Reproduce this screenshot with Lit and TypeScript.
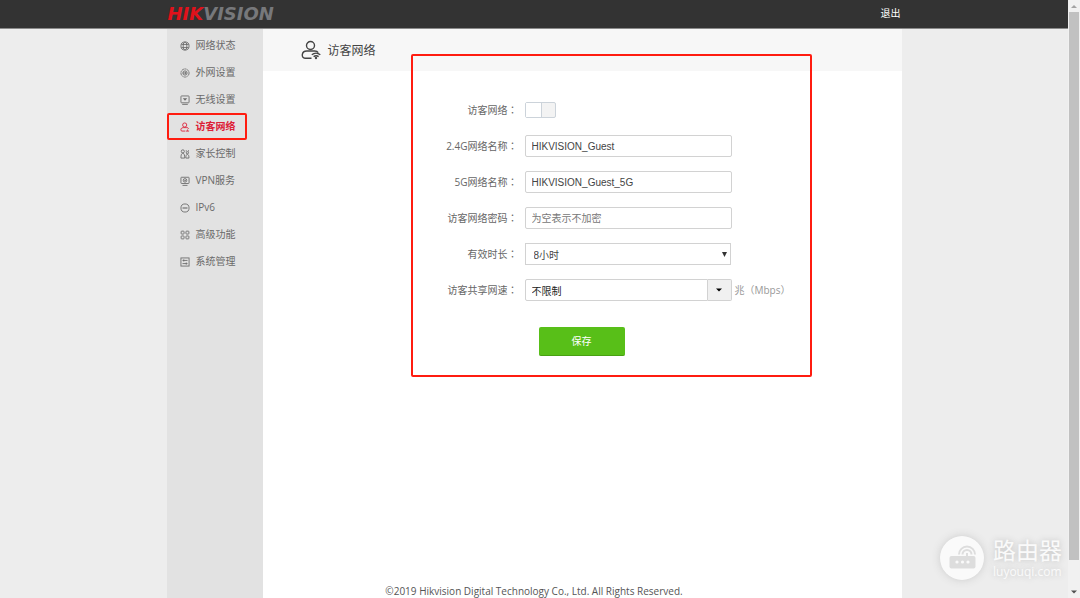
import { LitElement, html, css, svg } from "lit";
import { customElement, state } from "lit/decorators.js";

const icons: Record<string, unknown> = {
  globe: svg`<circle cx="8" cy="8" r="6.5"/><ellipse cx="8" cy="8" rx="3" ry="6.5"/><path d="M2.200 5.500h11.600M2.200 10.500h11.600"/>`,
  wan: svg`<circle cx="8" cy="8" r="6.5" stroke-dasharray="3.4 0.7"/><circle cx="8" cy="8" r="3.400"/><path d="M4.500 8h5M8 6.200l2 1.800-2 1.800"/>`,
  wifi: svg`<rect x="1.5" y="1.5" width="13" height="11" rx="1"/><path d="M4.500 5h7L8 9z" fill="currentColor" stroke="none"/><path d="M3.500 15h9"/>`,
  guest: svg`<circle cx="7.5" cy="4.8" r="3.3"/><path d="M8.5 14.5H3.2c-3 0-2.400-5.500 1.800-5.500h6c1.500 0 2.500.6 3 1.800M9.500 14.500h5M12 12v2"/>`,
  family: svg`<circle cx="4.500" cy="3.800" r="2.500"/><path d="M4.500 6.500C2 7.500 1.500 10 1.500 14.500h6C7.500 10 7 7.500 4.500 6.500z"/><circle cx="11.800" cy="6" r="1.800"/><path d="M11.800 8.500c-2 .5-2.500 2.500-2.500 6h5c0-3.500-.5-5.500-2.500-6zM10 2v2M13.600 2v2"/>`,
  vpn: svg`<rect x="1.500" y="2" width="13" height="10" rx="1"/><circle cx="8" cy="7" r="2.800"/><path d="M4 15h8M7 7l1 1 1.500-2"/>`,
  ipv6: svg`<circle cx="8" cy="8" r="6.500"/><path d="M4 8h8" stroke-width="1.800"/>`,
  grid: svg`<rect x="1.800" y="1.800" width="4.700" height="4.700" rx="1"/><rect x="9.500" y="1.800" width="4.700" height="4.700" rx="1"/><rect x="1.800" y="9.500" width="4.700" height="4.700" rx="1"/><rect x="9.500" y="9.500" width="4.700" height="4.700" rx="1"/>`,
  system: svg`<rect x="1.500" y="1.500" width="13" height="13"/><path d="M4 5.500h8M4 10.500h8M6 3.800v3.400M10 8.800v3.400"/>`,
};

const menu = [
  ["globe", "网络状态"],
  ["wan", "外网设置"],
  ["wifi", "无线设置"],
  ["guest", "访客网络"],
  ["family", "家长控制"],
  ["vpn", "VPN服务"],
  ["ipv6", "IPv6"],
  ["grid", "高级功能"],
  ["system", "系统管理"],
];

@customElement("app-root")
export class AppRoot extends LitElement {
  @state() private active = "guest";

  static styles = css`
    :host {
      display: flex;
      min-height: 100vh;
      position: relative;
      background: #ededed;
      color: #666;
      font: 10px/14px "Open Sans", "Noto Sans CJK SC", sans-serif;
    }
    * { box-sizing: border-box; }
    input, select, button { font: inherit; margin: 0; }
    .page { flex: 1; min-width: 0; display: flex; flex-direction: column; }
    .top { background: #333; border-bottom: 1px solid #8a8a8a; }
    .bar, .shell { width: 100%; max-width: 735px; margin: 0 auto; }
    .bar { display: flex; align-items: center; justify-content: space-between; height: 28px; padding: 0 1px; }
    .logo {
      font: italic bold 18px/28px "DejaVu Sans", sans-serif;
      color: #77787b;
    }
    .logo b { color: #e0121b; }
    .exit { color: #fff; text-decoration: none; padding-bottom: 2px; }
    .shell { flex: 1; display: grid; grid-template: 1fr auto / 96px minmax(0, 1fr); background: #fff; }
    .side { grid-area: 1 / 1 / 3 / 2; background: #e2e2e2; padding-top: 3px; }
    .side ul { list-style: none; margin: 0; padding: 0; }
    .item {
      position: relative;
      display: flex;
      align-items: center;
      gap: 6px;
      height: 27px;
      padding: 0 0 2px 13px;
      color: #6a6a6a;
      text-decoration: none;
    }
    .item svg { width: 10px; height: 10px; margin-top: 3px; }
    .icon { fill: none; stroke: currentColor; stroke-width: 1.4; }
    .item.on { color: #dd2038; font-weight: bold; }
    .item.on::after {
      content: "";
      position: absolute;
      inset: 0 16px 0 0;
      border: 2px solid #ff1c10;
      border-radius: 2px;
    }
    main { grid-area: 1 / 2; }
    .head {
      display: flex;
      align-items: center;
      gap: 7px;
      height: 42px;
      padding-left: 38px;
      background: #f7f7f7;
      color: #444;
    }
    .head svg { width: 20px; height: 20px; }
    h1 { margin: 0; padding-top: 2px; font-size: 12px; line-height: 18px; font-weight: normal; }
    .form {
      position: relative;
      display: grid;
      grid-template-columns: 104px 207px 1fr;
      grid-auto-rows: minmax(22px, auto);
      column-gap: 10px;
      row-gap: 14px;
      margin: 0 90px 0 148px;
      padding: 28px 0 21px;
      align-items: center;
    }
    .form::after {
      content: "";
      position: absolute;
      inset: -17px 0 0 0;
      border: 2px solid #ff1c10;
      border-radius: 2px;
      pointer-events: none;
    }
    .form label { grid-column: 1; text-align: right; white-space: nowrap; }
    .colon { font-family: "Noto Sans CJK TC", sans-serif; margin-right: -3px; }
    .field {
      width: 100%;
      height: 22px;
      padding: 0 6px;
      border: 1px solid #d2d2d2;
      border-radius: 2px;
      background: #fff;
      color: #444;
      font-family: "Liberation Sans", "Noto Sans CJK SC", sans-serif;
      font-size: 10px;
      outline: none;
    }
    .field::placeholder { color: #777; }
    .switch {
      appearance: none;
      width: 31px;
      height: 16px;
      border: 1px solid #ccd3da;
      border-radius: 2px;
      background: #f3f3f3;
      display: flex;
    }
    .switch::before { content: ""; width: 15px; background: #fff; border-right: 1px solid #ccd3da; }
    .switch:checked { justify-content: flex-end; background: #58bf18; }
    .pick { display: grid; align-items: center; padding-right: 1px; }
    .pick > * { grid-area: 1 / 1; }
    select.field { appearance: none; border-radius: 0; padding: 3px 8px 0; }
    .pick svg { width: 5px; height: 5px; justify-self: end; margin-right: 4px; pointer-events: none; }
    .combo { display: flex; }
    .combo .field { flex: 1; min-width: 0; border-radius: 2px 0 0 2px; color: #222; }
    .drop {
      width: 24px;
      padding: 0;
      border: 1px solid #d2d2d2;
      border-left: 0;
      border-radius: 0 2px 2px 0;
      background: #f0f0f0;
      display: grid;
      place-items: center;
    }
    .drop svg { width: 6px; height: 4px; }
    .unit { color: #999; white-space: nowrap; margin-left: -7px; }
    .save {
      grid-column: 2;
      justify-self: start;
      width: 86px;
      height: 29px;
      margin: 12px 0 0 14px;
      border: 0;
      border-bottom: 1px solid #48a012;
      border-radius: 2px;
      background: #58bf18;
      color: #fff;
    }
    footer { grid-area: 2 / 1 / 3 / 3; text-align: center; color: #555; }
    .scroll {
      width: 12px;
      display: flex;
      flex-direction: column;
      align-items: center;
      background: #f1f1f1;
    }
    .scroll svg { width: 12px; height: 12px; }
    .thumb { flex: 1; width: 10px; background: #c1c1c1; margin-bottom: 26px; }
    .mark {
      position: absolute;
      right: 18px;
      bottom: 18px;
      display: flex;
      align-items: center;
      gap: 9px;
      color: #fafafa;
      text-shadow: 0 0 6px #bbb;
    }
    .mark svg { width: 44px; height: 44px; border-radius: 50%; box-shadow: 0 0 9px #ccc; }
    .words { display: flex; flex-direction: column; }
    .words span { font-size: 23px; line-height: 28px; }
    .words small { font-size: 12px; line-height: 16px; }
  `;

  private icon(name: string) {
    return html`<svg class="icon" viewBox="0 0 16 16" aria-hidden="true">${icons[name]}</svg>`;
  }

  private label(target: string, text: string) {
    return html`<label for=${target}>${text}<span class="colon">：</span></label>`;
  }

  render() {
    return html`
      <div class="page">
        <header class="top">
          <div class="bar">
            <div class="logo"><b>HIK</b>VISION</div>
            <a class="exit" href="#">退出</a>
          </div>
        </header>
        <div class="shell">
          <nav class="side">
            <ul>
              ${menu.map(
                ([id, text]) => html`<li>
                  <a class="item ${this.active === id ? "on" : ""}" href="#" @click=${() => (this.active = id)}
                    >${this.icon(id)}<span>${text}</span></a>
                </li>`
              )}
            </ul>
          </nav>
          <main>
            <div class="head">
              <svg class="icon" viewBox="0 0 20 20" aria-hidden="true">
                <circle cx="9.500" cy="5.500" r="4"/>
                <path d="M10.500 18.200H4c-4 0-3.800-7.200 1.800-7.200h8c1.600 0 2.700.6 3.400 1.700"/>
                <path d="M10.800 14.800c2.400-2 6-2 8.500 0M12.600 16.600c1.500-1.100 3.500-1.100 5 0"/>
                <circle cx="15" cy="18" r=".5"/>
              </svg>
              <h1>访客网络</h1>
            </div>
            <form class="form" @submit=${(e: Event) => e.preventDefault()}>
              ${this.label("enable", "访客网络")}
              <input class="switch" id="enable" type="checkbox" />
              ${this.label("n24", "2.4G网络名称")}
              <input class="field" id="n24" type="text" value="HIKVISION_Guest" />
              ${this.label("n5", "5G网络名称")}
              <input class="field" id="n5" type="text" value="HIKVISION_Guest_5G" />
              ${this.label("pw", "访客网络密码")}
              <input class="field" id="pw" type="text" placeholder="为空表示不加密" />
              ${this.label("time", "有效时长")}
              <div class="pick">
                <select class="field" id="time"><option>8小时</option></select>
                <svg viewBox="0 0 5 5" aria-hidden="true"><path d="M0 0h5L2.500 5z" fill="#333"/></svg>
              </div>
              ${this.label("speed", "访客共享网速")}
              <div class="combo">
                <input class="field" id="speed" type="text" value="不限制" />
                <button class="drop" type="button" aria-label="选择">
                  <svg viewBox="0 0 6 4"><path d="M0 .5h6l-3 3z" fill="#000"/></svg>
                </button>
              </div>
              <span class="unit">兆（Mbps）</span>
              <button class="save" type="submit">保存</button>
            </form>
          </main>
          <footer>©2019 Hikvision Digital Technology Co., Ltd. All Rights Reserved.</footer>
        </div>
      </div>
      <div class="scroll" aria-hidden="true">
        <svg viewBox="0 0 12 12"><path d="M3 8l3-3 3 3z" fill="#a3a3a3"/></svg>
        <div class="thumb"></div>
        <svg viewBox="0 0 12 12"><path d="M3 4.500h6l-3 3z" fill="#505050"/></svg>
      </div>
      <div class="mark">
        <svg viewBox="0 0 44 44" aria-hidden="true">
          <circle cx="22" cy="22" r="22" fill="#fafafa"/>
          <rect x="9.500" y="20" width="26" height="12.500" rx="2" fill="#ddd"/>
          <path d="M19 18.500a8 8 0 0 1 16 0M22.500 18.500a4.500 4.500 0 0 1 9 0" fill="none" stroke="#ddd" stroke-width="2"/>
          <path d="M27 17v4" stroke="#ddd" stroke-width="2"/>
          <g fill="#fafafa"><circle cx="17" cy="26" r="1.600"/><circle cx="22.500" cy="26" r="1.600"/><circle cx="28" cy="26" r="1.600"/></g>
        </svg>
        <div class="words"><span>路由器</span><small>luyouqi.com</small></div>
      </div>
    `;
  }
}
